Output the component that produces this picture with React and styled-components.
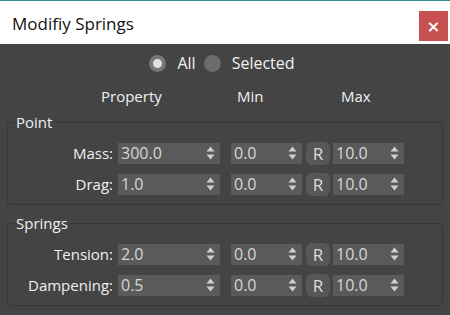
import React from 'react'
import styled, { createGlobalStyle } from 'styled-components'

const GlobalStyle = createGlobalStyle`
  html, body {
    margin: 0;
    padding: 0;
    background: #444444;
  }
  body {
    font-family: "Open Sans", "Noto Sans", sans-serif;
  }
`

const groups = [
  {
    title: 'Point',
    rows: [
      { label: 'Mass:', value: '300.0', min: '0.0', max: '10.0' },
      { label: 'Drag:', value: '1.0', min: '0.0', max: '10.0' },
    ],
  },
  {
    title: 'Springs',
    rows: [
      { label: 'Tension:', value: '2.0', min: '0.0', max: '10.0' },
      { label: 'Dampening:', value: '0.5', min: '0.0', max: '10.0' },
    ],
  },
]

const Arrows = () => (
  <svg width="9" height="14" viewBox="0 0 9 14">
    <path d="M4.5 0.5 L8.5 5.5 L0.5 5.5 Z" fill="#cfcfcf" />
    <path d="M4.5 13.5 L8.5 8.5 L0.5 8.5 Z" fill="#cfcfcf" />
  </svg>
)

const SpinBox = ({ value, width, left }) => (
  <Spin $w={width} $left={left}>
    <SpinValue>{value}</SpinValue>
    <Arrows />
  </Spin>
)

export default function App() {
  return (
    <Window>
      <GlobalStyle />
      <TitleBar>
        <Title>Modifiy Springs</Title>
        <Close>×</Close>
      </TitleBar>
      <Body>
        <RadioRow>
          <Radio $checked />
          <RadioLabel>All</RadioLabel>
          <Radio />
          <RadioLabel>Selected</RadioLabel>
        </RadioRow>
        <HeaderRow>
          <HeaderCell $w={136}>Property</HeaderCell>
          <HeaderCell $w={104}>Min</HeaderCell>
          <HeaderCell>Max</HeaderCell>
        </HeaderRow>
        {groups.map((g) => (
          <Group key={g.title}>
            <Legend>{g.title}</Legend>
            {g.rows.map((r) => (
              <Row key={r.label}>
                <Label>{r.label}</Label>
                <SpinBox value={r.value} width={102} left={0} />
                <SpinBox value={r.min} width={71} left={11} />
                <ResetButton>R</ResetButton>
                <SpinBox value={r.max} width={71} left={3} />
              </Row>
            ))}
          </Group>
        ))}
      </Body>
    </Window>
  )
}

/* STYLES */
const Window = styled.div`
  width: 450px;
  height: 315px;
  display: flex;
  flex-direction: column;
  background: #444444;
  overflow: hidden;
`

const TitleBar = styled.div`
  height: 43px;
  flex: none;
  display: flex;
  align-items: center;
  justify-content: space-between;
  background: #ffffff;
  border-top: 1px solid #2f8c8c;
  padding-left: 12px;
  padding-right: 2px;
`

const Title = styled.div`
  font-family: "Open Sans", sans-serif;
  font-size: 17px;
  color: #111111;
  padding-top: 1px;
`

const Close = styled.div`
  width: 29px;
  height: 30px;
  margin-top: 7px;
  background: #c75050;
  color: #ffffff;
  display: flex;
  align-items: center;
  justify-content: center;
  font-family: "DejaVu Sans", sans-serif;
  font-weight: bold;
  font-size: 16px;
`

const Body = styled.div`
  flex: 1;
  padding: 8px 7px 0 7px;
  display: flex;
  flex-direction: column;
  color: #eeeeee;
  font-size: 15px;
`

const RadioRow = styled.div`
  height: 22px;
  display: flex;
  align-items: center;
  justify-content: center;
  padding-left: 2px;
`

const Radio = styled.span`
  width: 17px;
  height: 17px;
  border-radius: 50%;
  box-sizing: border-box;
  background: ${(p) => (p.$checked ? '#e2e2e2' : '#6b6b6b')};
  border: ${(p) => (p.$checked ? '4px solid #777777' : 'none')};
  margin-right: 11px;
`

const RadioLabel = styled.span`
  margin-right: 8px;
  color: #f2f2f2;
  font-size: 16px;
`

const HeaderRow = styled.div`
  height: 22px;
  margin-top: 11px;
  display: flex;
  align-items: center;
  padding-left: 94px;
`

const HeaderCell = styled.div`
  width: ${(p) => (p.$w ? `${p.$w}px` : 'auto')};
  color: #f0f0f0;
`

const Group = styled.fieldset`
  margin: 5px 0 0 0;
  padding: 0 0 9px 0;
  border: 1px solid #383838;
  border-radius: 3px;
  display: flex;
  flex-direction: column;
  gap: 9px;
  & + & {
    margin-top: 8px;
  }
`

const Legend = styled.legend`
  margin-left: 6px;
  padding: 0 2px;
  height: 20px;
  line-height: 20px;
  color: #f0f0f0;
`

const Row = styled.div`
  display: flex;
  align-items: center;
  height: 22px;
  &:first-of-type {
    margin-top: 10px;
  }
`

const Label = styled.div`
  width: 105px;
  margin-right: 5px;
  text-align: right;
  color: #f0f0f0;
`

const Spin = styled.div`
  width: ${(p) => p.$w}px;
  height: 21px;
  margin-left: ${(p) => p.$left}px;
  box-sizing: border-box;
  background: #5a5a5a;
  display: flex;
  align-items: center;
  justify-content: space-between;
  padding: 0 5px 0 3px;
`

const SpinValue = styled.span`
  font-size: 16px;
  color: #d6d6d6;
  line-height: 21px;
`

const ResetButton = styled.div`
  width: 24px;
  height: 23px;
  margin-left: 4px;
  border-radius: 6px;
  background: #575757;
  color: #dcdcdc;
  display: flex;
  align-items: center;
  justify-content: center;
  font-size: 17px;
`
